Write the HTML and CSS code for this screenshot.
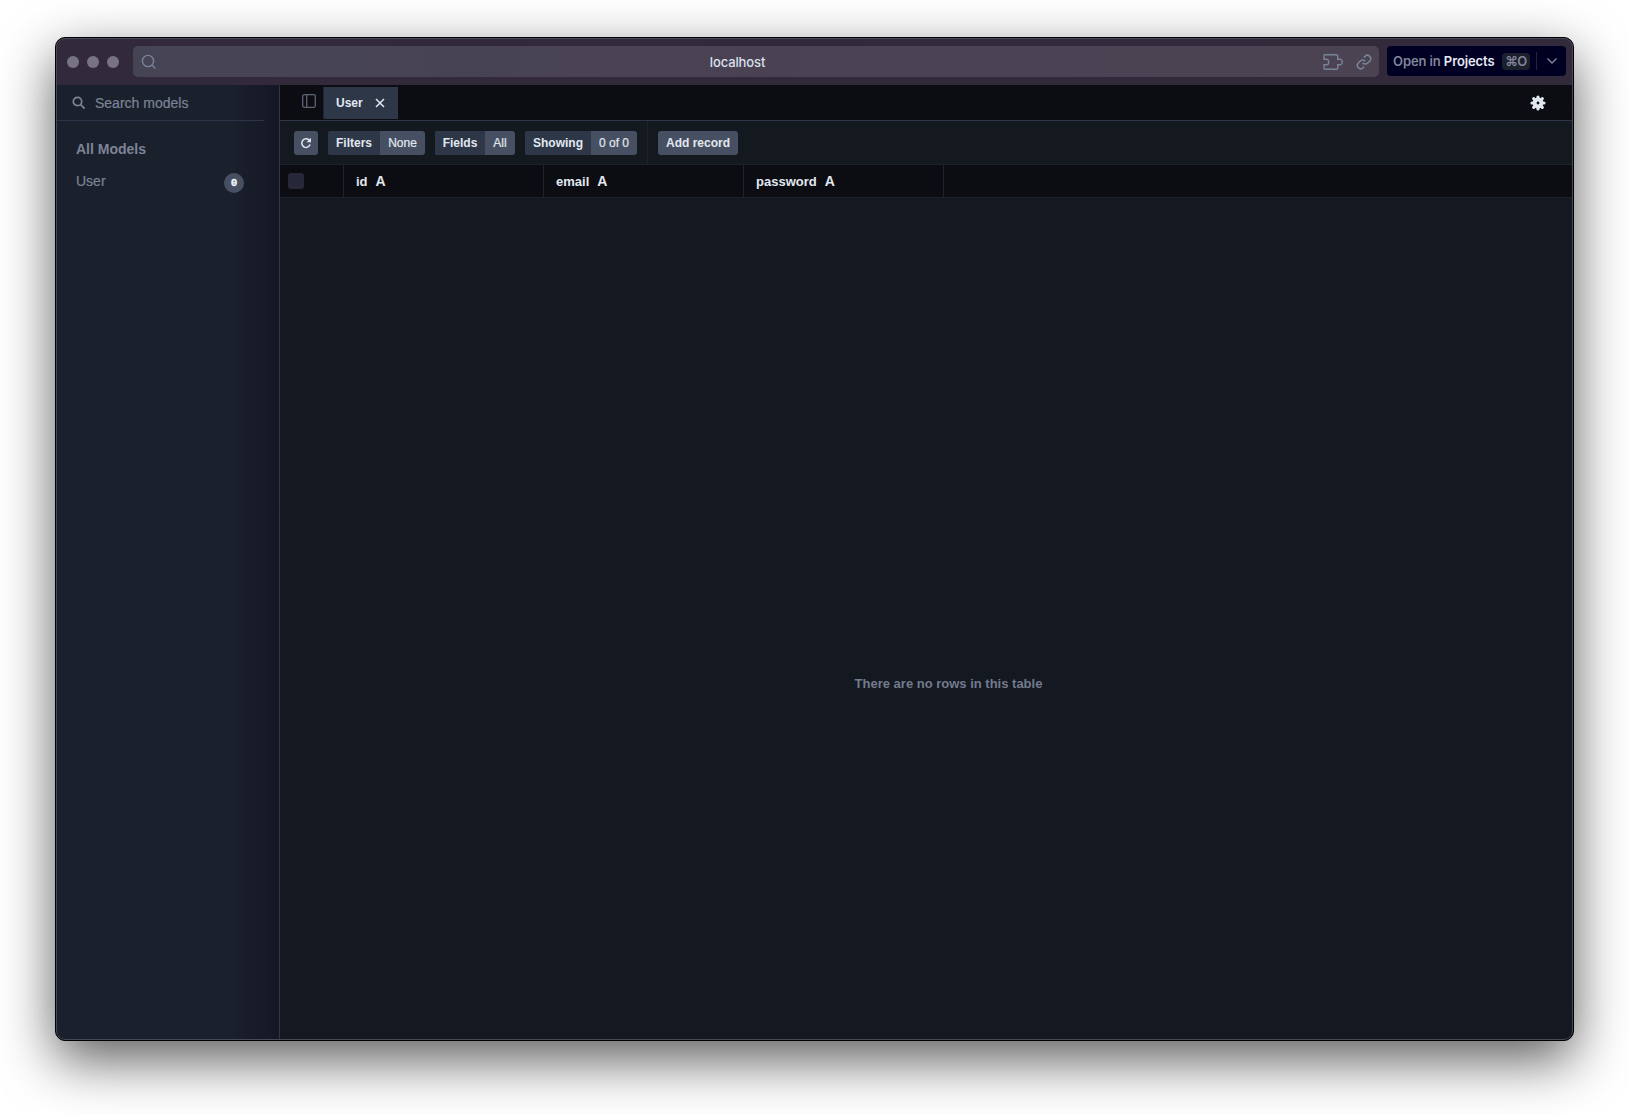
FILE: index.html
```html
<!DOCTYPE html>
<html lang="en">
<head>
<meta charset="utf-8">
<title>localhost</title>
<link rel="stylesheet" href="styles.css">
</head>
<body>
<div class="window">
  <header class="titlebar">
    <div class="lights"><i></i><i></i><i></i></div>
    <div class="address">
      <svg class="address-search" width="16" height="16" viewBox="0 0 16 16"><circle cx="7" cy="7" r="5.6"/><path d="M11.2 11.2L14.4 14.4"/></svg>
      <span class="host">localhost</span>
      <svg class="ext" width="20" height="18" viewBox="0 0 20 18"><path d="M2 1.700H13.400a1.300 1.300 0 0 1 1.300 1.300V6.300H16.200a1.600 1.600 0 0 1 1.600 0q1.500.500 1.500 2.700t-1.500 2.700a1.600 1.600 0 0 1-1.600 0H14.700V15a1.300 1.300 0 0 1-1.300 1.300H2.300A1.300 1.300 0 0 1 1 15V11.700H3.500A2.200 2.200 0 0 0 5.700 9.500V8.500A2.200 2.200 0 0 0 3.500 6.300H1V2.700a1 1 0 0 1 1-1z"/></svg>
      <svg class="link" width="16" height="16" viewBox="0 0 24 24"><path d="M10 13a5 5 0 0 0 7.540.540l3-3a5 5 0 0 0-7.070-7.070l-1.720 1.710"/><path d="M14 11a5 5 0 0 0-7.540-.540l-3 3a5 5 0 0 0 7.070 7.070l1.710-1.710"/></svg>
    </div>
    <div class="open">
      <span class="open-label">Open in <b>Projects</b></span>
      <kbd>⌘O</kbd>
      <span class="open-rule"></span>
      <svg width="12" height="8" viewBox="0 0 12 8"><path d="M1.500 1.500L6 6L10.500 1.500"/></svg>
    </div>
  </header>
  <div class="body">
    <aside class="sidebar">
      <div class="search">
        <svg width="14" height="14" viewBox="0 0 14 14"><circle cx="5.500" cy="5.500" r="4.200"/><path d="M8.700 8.700L12.600 12.600"/></svg>
        <span>Search models</span>
      </div>
      <h2>All Models</h2>
      <div class="model"><span class="model-name">User</span><span class="badge">0</span></div>
    </aside>
    <main class="main">
      <nav class="tabs">
        <svg class="panel" width="14" height="14" viewBox="0 0 14 14"><rect x=".7" y=".7" width="12.600" height="12.600" rx="1.500"/><path d="M4.700 1v12"/></svg>
        <div class="tab"><span>User</span><svg width="10" height="10" viewBox="0 0 10 10"><path d="M1 1l8 8M9 1L1 9"/></svg></div>
        <svg class="gear" width="16" height="16" viewBox="0 0 16 16"><path class="teeth" d="M8 2v12M2 8h12M3.700 3.700l8.600 8.600M12.300 3.700L3.700 12.300"/><circle class="disc" cx="8" cy="8" r="5.400"/><circle class="hole" cx="8" cy="8" r="1.400"/></svg>
      </nav>
      <div class="toolbar">
        <div class="refresh"><svg width="12" height="12" viewBox="0 0 12 12"><path d="M10.100 7.600A4.300 4.300 0 1 1 9.500 3.500"/><path class="head" d="M11 .8v4.400H6.600z"/></svg></div>
        <div class="pill filters"><b>Filters</b><span>None</span></div>
        <div class="pill fields"><b>Fields</b><span>All</span></div>
        <div class="pill showing"><b>Showing</b><span>0 of 0</span></div>
        <div class="rule"></div>
        <div class="add">Add record</div>
      </div>
      <div class="head-row">
        <div class="check"><i></i></div>
        <div class="col"><span>id</span><b>A</b></div>
        <div class="col"><span>email</span><b>A</b></div>
        <div class="col"><span>password</span><b>A</b></div>
      </div>
      <div class="empty"><span>There are no rows in this table</span></div>
    </main>
  </div>
</div>
</body>
</html>
```
FILE: styles.css
```css
* { box-sizing: border-box; }
body {
  margin: 0;
  height: 1114px;
  padding: 37px 55px 73px;
  background: #fff;
  font-family: "Liberation Sans", Arial, sans-serif;
  overflow: hidden;
}
svg { fill: none; stroke: currentColor; stroke-width: 1.5; flex: none; }
.window {
  position: relative;
  width: 1519px;
  height: 1004px;
  border: 1px solid #000;
  border-radius: 10px;
  background: #141820;
  overflow: hidden;
  display: flex;
  flex-direction: column;
  box-shadow: 0 19px 54px rgba(0, 0, 0, .64);
}
.window::after {
  content: "";
  position: absolute;
  inset: 0;
  border: 1px solid #474858;
  border-radius: 9px;
}
.titlebar {
  height: 47px;
  background: #32293b;
  display: flex;
  align-items: center;
  padding: 0 7px 0 11px;
}
.lights { display: flex; gap: 8px; width: 66px; margin-top: 1px; }
.lights i { width: 12px; height: 12px; border-radius: 50%; background: #777384; }
.address {
  width: 1246px;
  height: 31px;
  border-radius: 5px;
  background: linear-gradient(90deg, #454455, #4a4253 50%, #4b4352);
  color: #78839a;
  display: flex;
  align-items: center;
  padding: 0 7px 0 8px;
}
.address svg { stroke-width: 1.4; }
.host { flex: 1; text-align: center; color: #d9e0ec; font: 500 13px Inter, sans-serif; letter-spacing: -.12px; padding-right: 5px; }
.address .ext { margin-right: 13px; }
.address .link { stroke-width: 2.300; }
.open {
  margin-left: 8px;
  width: 179px;
  height: 30px;
  margin-top: -1px;
  border-radius: 4px;
  background: #000022;
  color: #81859a;
  display: flex;
  align-items: center;
  padding-left: 6px;
  font: 600 13px Inter, sans-serif;
  letter-spacing: -.1px;
}
.open-label { width: 109px; white-space: nowrap; }
.open b { color: #e6ebf5; font-weight: 600; }
kbd { width: 28px; height: 17px; border-radius: 4px; background: #1c202c; font: 600 13px/17px Inter, "DejaVu Sans", sans-serif; letter-spacing: -.5px; text-align: center; white-space: nowrap; }
.open-rule { width: 1px; height: 18px; background: #22253a; margin: 0 9px 0 6px; }
.open svg { stroke-width: 1.400; }
.body { flex: 1; display: flex; min-height: 0; }
.sidebar {
  width: 224px;
  border-right: 1px solid #30364a;
  background: linear-gradient(90deg, #1a202c 78%, #171a27 92%, #151824);
  color: #7d8496;
}
.search { width: 208px; height: 36px; border-bottom: 1px solid #2d3448; display: flex; align-items: center; gap: 9px; padding-left: 16px; font-size: 14px; }
.search svg { stroke-width: 1.7; }
.search span, .model-name { -webkit-text-stroke: .2px currentColor; }
h2 { margin: 20px 0 0 20px; font-size: 14px; line-height: 16px; }
.model { display: flex; align-items: center; justify-content: space-between; padding: 0 35px 0 20px; margin-top: 15px; height: 22px; font-size: 14px; }
.model-name { margin-top: -4px; }
.badge { width: 20px; height: 20px; border-radius: 50%; background: #475062; color: #f0f4fa; font: bold 11px/20px "Liberation Mono", monospace; -webkit-text-stroke: .3px currentColor; text-align: center; }
.main { flex: 1; display: flex; flex-direction: column; min-width: 0; color: #e2e8f0; }
.tabs { height: 36px; background: #0c0d12; border-bottom: 1px solid #2d3448; display: flex; align-items: center; padding: 0 27px 0 22px; }
.panel { color: #5b6477; margin: -3px 7px 0 0; stroke-width: 1.300; }
.tab { width: 75px; height: 32px; margin-top: 1px; border-left: 1px solid #1e2431; background: #2d3748; display: flex; align-items: center; gap: 12px; padding-left: 12px; font-size: 12px; font-weight: bold; }
.tab span { width: 27px; }
.gear { margin-left: auto; }
.teeth { stroke-width: 3.200; stroke-linecap: round; }
.disc { fill: currentColor; stroke: none; }
.hole { fill: #0c0d12; stroke: none; }
.toolbar { height: 44px; background: #141920; border-bottom: 1px solid #1d222e; display: flex; align-items: center; gap: 10px; padding-left: 14px; font-size: 12px; }
.toolbar span { -webkit-text-stroke: .2px currentColor; }
.refresh, .add, .pill { height: 24px; border-radius: 3px; background: #475062; display: flex; align-items: center; justify-content: center; }
.refresh { width: 24px; }
.refresh .head { fill: currentColor; stroke: none; }
.pill { overflow: hidden; }
.pill b, .pill span { line-height: 24px; text-align: center; }
.pill b { background: #2d3748; }
.filters b { width: 52px; } .filters span { width: 45px; }
.fields b { width: 50px; } .fields span { width: 30px; }
.showing b { width: 66px; } .showing span { width: 46px; }
.rule { width: 1px; height: 43px; background: #1d222e; }
.add { width: 80px; font-weight: bold; }
.head-row { height: 33px; background: #0c0d12; border-bottom: 1px solid #1d222e; display: flex; font-size: 13px; font-weight: bold; }
.check { width: 64px; border-right: 1px solid #1d222e; padding: 8px; }
.check i { display: block; width: 16px; height: 16px; border-radius: 3px; background: #262839; }
.col { width: 200px; border-right: 1px solid #1d222e; display: flex; align-items: center; gap: 8px; padding-left: 12px; }
.col b { font-size: 14px; }
.empty { flex: 1; display: flex; align-items: center; justify-content: center; padding: 129px 0 0 44px; color: #737b8e; font-size: 13px; font-weight: bold; }
```
